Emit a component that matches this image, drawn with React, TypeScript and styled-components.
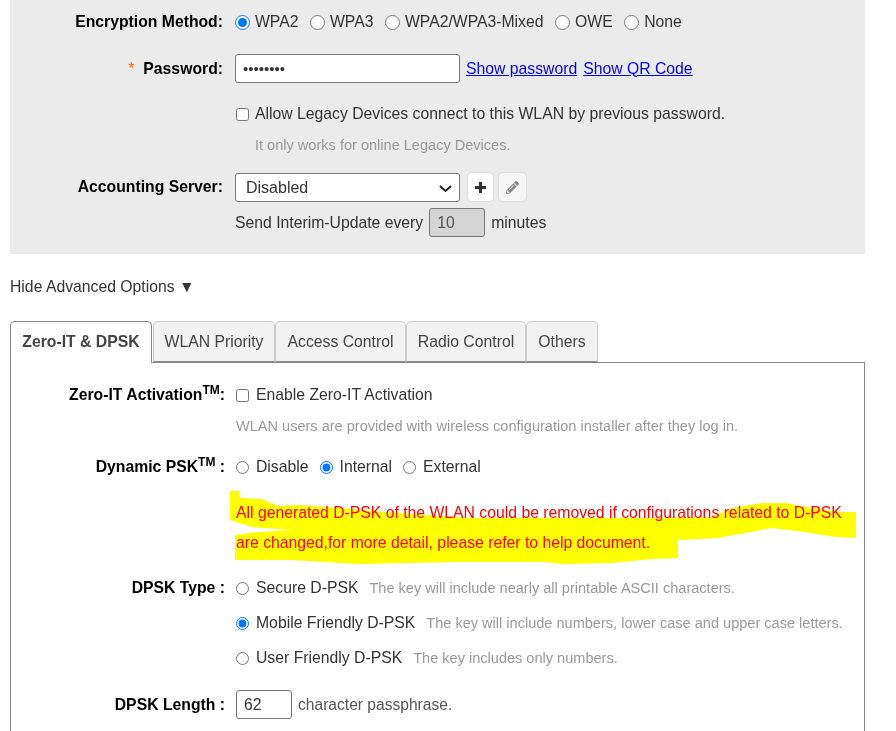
import React from "react";
import styled, { createGlobalStyle } from "styled-components";
import { FaPencilAlt } from "react-icons/fa";

const GlobalStyle = createGlobalStyle`
  html, body {
    margin: 0;
    background: #fff;
    height: 731px;
    overflow: hidden;
  }
  body, input, select {
    font-family: "Liberation Sans", Arial, sans-serif;
    font-size: 15.75px;
    color: #333;
  }
`;

const Page = styled.div`
  position: relative;
  width: 855px;
  padding: 0 31px 0 10px;
`;

const BasicPanel = styled.section`
  background: #ebebeb;
  height: 254px;
  box-sizing: border-box;
`;

const Row = styled.div<{ $top?: number; $height: number; $label?: number }>`
  display: grid;
  grid-template-columns: ${(p) => p.$label ?? 213}px 1fr;
  column-gap: ${(p) => (p.$label ? 11 : 12)}px;
  align-items: center;
  margin-top: ${(p) => p.$top ?? 0}px;
  height: ${(p) => p.$height}px;
`;

const Label = styled.label`
  text-align: right;
  font-weight: bold;
  color: #000;
  white-space: nowrap;
  sup {
    font-size: 12px;
    line-height: 0;
  }
`;

const Required = styled.span`
  color: #f60;
  font-weight: normal;
  margin-right: 9px;
`;

const Controls = styled.div`
  display: flex;
  align-items: center;
  white-space: nowrap;
`;

const RadioGroup = styled(Controls)<{ $wide?: boolean }>`
  gap: ${(p) => (p.$wide ? 11.5 : 11)}px;
`;

const Option = styled.label<{ $small?: boolean }>`
  display: inline-flex;
  align-items: center;
  gap: ${(p) => (p.$small ? 7 : 5)}px;
  input {
    margin: 0;
    width: ${(p) => (p.$small ? 13 : 15)}px;
    height: ${(p) => (p.$small ? 13 : 15)}px;
  }
`;

const Checkbox = styled.input`
  && {
    width: 13px;
    height: 13px;
    margin: 0 1px;
  }
`;

const Hint = styled.span<{ $indent?: number }>`
  color: #999;
  font-size: 14.55px;
  margin-left: ${(p) => p.$indent ?? 0}px;
`;

const Suffix = styled.span`
  color: #555;
  font-size: 15.6px;
  margin-left: 6px;
`;

const TextBox = styled.input<{ $width: number; $disabled?: boolean; $gap?: number }>`
  box-sizing: border-box;
  width: ${(p) => p.$width}px;
  height: 29px;
  margin: 0 ${(p) => p.$gap ?? 0}px;
  padding: 0 7px;
  border: 1px solid #767676;
  border-radius: 3px;
  background: ${(p) => (p.$disabled ? "#d4d4d4" : "#fff")};
  color: ${(p) => (p.$disabled ? "#555" : "#333")};
  outline: none;
`;

const PasswordBox = styled(TextBox)`
  font-size: 15px;
`;

const Link = styled.a`
  color: #00e;
  text-decoration: underline;
  margin-left: 6px;
`;

const SelectWrap = styled.div`
  position: relative;
  width: 225px;
  height: 29px;
  svg {
    position: absolute;
    right: 8px;
    top: 12px;
    pointer-events: none;
  }
`;

const Select = styled.select`
  appearance: none;
  box-sizing: border-box;
  width: 100%;
  height: 100%;
  padding-left: 10px;
  border: 1px solid #767676;
  border-radius: 3px;
  background: #fff;
  font-size: 16px;
`;

const IconButton = styled.button<{ $muted?: boolean }>`
  display: inline-flex;
  align-items: center;
  justify-content: center;
  box-sizing: border-box;
  width: ${(p) => (p.$muted ? 29 : 27)}px;
  height: 30px;
  margin-left: ${(p) => (p.$muted ? 4 : 7)}px;
  padding: 0;
  border: 1px solid #ddd;
  border-radius: 5px;
  background: ${(p) => (p.$muted ? "#f6f6f6" : "#fff")};
  color: ${(p) => (p.$muted ? "#888" : "#333")};
  font-size: 13px;
`;

const Toggle = styled.div`
  height: 24px;
  line-height: 24px;
  margin-top: 21px;
  color: #333;
`;

const TabBar = styled.div`
  display: flex;
  margin-top: 22px;
  height: 42px;
  position: relative;
  z-index: 1;
`;

const Tab = styled.div<{ $active?: boolean; $width: number }>`
  box-sizing: border-box;
  height: ${(p) => (p.$active ? 42 : 41)}px;
  width: ${(p) => p.$width}px;
  margin-right: ${(p) => (p.$active ? 1 : 0)}px;
  line-height: 39px;
  text-align: center;
  border: 1px solid ${(p) => (p.$active ? "#888" : "#ccc")};
  border-bottom: ${(p) => (p.$active ? "none" : "1px solid #888")};
  border-radius: 5px 5px 0 0;
  background: ${(p) => (p.$active ? "#fff" : "#f2f2f2")};
  font-weight: ${(p) => (p.$active ? "bold" : "normal")};
  color: #444;
`;

const TabPanel = styled.section`
  box-sizing: border-box;
  margin-top: -1px;
  height: 400px;
  border: 1px solid #888;
  padding-top: 17px;
`;

const Note = styled.div`
  margin: 16px 0 0 225px;
  color: #f00;
  line-height: 30px;
  white-space: nowrap;
`;

const Highlight = styled.svg`
  position: absolute;
  left: 0;
  top: 0;
  mix-blend-mode: multiply;
  pointer-events: none;
`;

const App = () => {
  return (
    <Page>
      <GlobalStyle />
      <BasicPanel>
        <Row $height={44}>
          <Label>Encryption Method:</Label>
          <RadioGroup $wide>
            <Option><input type="radio" name="enc" defaultChecked />WPA2</Option>
            <Option><input type="radio" name="enc" />WPA3</Option>
            <Option><input type="radio" name="enc" />WPA2/WPA3-Mixed</Option>
            <Option><input type="radio" name="enc" />OWE</Option>
            <Option><input type="radio" name="enc" />None</Option>
          </RadioGroup>
        </Row>
        <Row $top={10} $height={29}>
          <Label><Required>*</Required>Password:</Label>
          <Controls>
            <PasswordBox $width={225} type="password" defaultValue="12345678" />
            <Link href="#">Show password</Link>
            <Link href="#">Show QR Code</Link>
          </Controls>
        </Row>
        <Row $top={16} $height={30}>
          <span />
          <Controls>
            <Option><Checkbox type="checkbox" />Allow Legacy Devices connect to this WLAN by previous password.</Option>
          </Controls>
        </Row>
        <Row $top={1} $height={30}>
          <span />
          <Controls><Hint $indent={20}>It only works for online Legacy Devices.</Hint></Controls>
        </Row>
        <Row $top={12} $height={29}>
          <Label>Accounting Server:</Label>
          <Controls>
            <SelectWrap>
              <Select defaultValue="Disabled"><option>Disabled</option></Select>
              <svg width="13" height="7" viewBox="0 0 13 7">
                <path d="M1 1 L6.5 6 L12 1" fill="none" stroke="#222" strokeWidth="2" />
              </svg>
            </SelectWrap>
            <IconButton>
              <svg width="11" height="11" viewBox="0 0 11 11">
                <path d="M4 0h3v4h4v3H7v4H4V7H0V4h4z" fill="#333" />
              </svg>
            </IconButton>
            <IconButton $muted><FaPencilAlt /></IconButton>
          </Controls>
        </Row>
        <Row $top={7} $height={29}>
          <span />
          <Controls>
            Send Interim-Update every
            <TextBox $width={56} $gap={6} $disabled defaultValue="10" />
            minutes
          </Controls>
        </Row>
      </BasicPanel>

      <Toggle>Hide Advanced Options ▼</Toggle>

      <TabBar>
        <Tab $active $width={142}>Zero-IT &amp; DPSK</Tab>
        <Tab $width={122}>WLAN Priority</Tab>
        <Tab $width={131}>Access Control</Tab>
        <Tab $width={120}>Radio Control</Tab>
        <Tab $width={72}>Others</Tab>
      </TabBar>

      <TabPanel>
        <Row $height={30} $label={214}>
          <Label>Zero-IT Activation<sup>TM</sup>:</Label>
          <Controls>
            <Option $small><input type="checkbox" />Enable Zero-IT Activation</Option>
          </Controls>
        </Row>
        <Row $top={1} $height={30} $label={214}>
          <span />
          <Controls><Hint>WLAN users are provided with wireless configuration installer after they log in.</Hint></Controls>
        </Row>
        <Row $top={11} $height={30} $label={214}>
          <Label>Dynamic PSK<sup>TM</sup> :</Label>
          <RadioGroup>
            <Option $small><input type="radio" name="psk" />Disable</Option>
            <Option $small><input type="radio" name="psk" defaultChecked />Internal</Option>
            <Option $small><input type="radio" name="psk" />External</Option>
          </RadioGroup>
        </Row>
        <Note>
          All generated D-PSK of the WLAN could be removed if configurations related to D-PSK<br />
          are changed,for more detail, please refer to help document.
        </Note>
        <Row $top={15} $height={30} $label={214}>
          <Label>DPSK Type :</Label>
          <RadioGroup>
            <Option $small><input type="radio" name="type" />Secure D-PSK</Option>
            <Hint>The key will include nearly all printable ASCII characters.</Hint>
          </RadioGroup>
        </Row>
        <Row $top={5} $height={30} $label={214}>
          <span />
          <RadioGroup>
            <Option $small><input type="radio" name="type" defaultChecked />Mobile Friendly D-PSK</Option>
            <Hint>The key will include numbers, lower case and upper case letters.</Hint>
          </RadioGroup>
        </Row>
        <Row $top={5} $height={30} $label={214}>
          <span />
          <RadioGroup>
            <Option $small><input type="radio" name="type" />User Friendly D-PSK</Option>
            <Hint>The key includes only numbers.</Hint>
          </RadioGroup>
        </Row>
        <Row $top={17} $height={29} $label={214}>
          <Label>DPSK Length :</Label>
          <Controls>
            <TextBox $width={56} defaultValue="62" />
            <Suffix>character passphrase.</Suffix>
          </Controls>
        </Row>
      </TabPanel>

      {/* marker stroke drawn over the warning text */}
      <Highlight width="896" height="731" viewBox="0 0 896 731">
        <path
          fill="#ffff00"
          d="M230 491 L239 491 L240 498 L262 499 L278 506 L300 505 L340 508 L385 512 L470 518 L545 518 L612 518 L645 518 L712 517 L732 508 L762 503 L785 503 L812 508 L842 512 L856 512 L856 538 L835 537 L805 532 L772 528 L745 533 L718 538 L678 540 L678 558 L652 559 L612 563 L565 564 L542 562 L458 562 L358 564 L292 560 L235 560 L235 535 L258 532 L292 530 L252 527 L230 520 Z"
        />
      </Highlight>
    </Page>
  );
};

export default App;
